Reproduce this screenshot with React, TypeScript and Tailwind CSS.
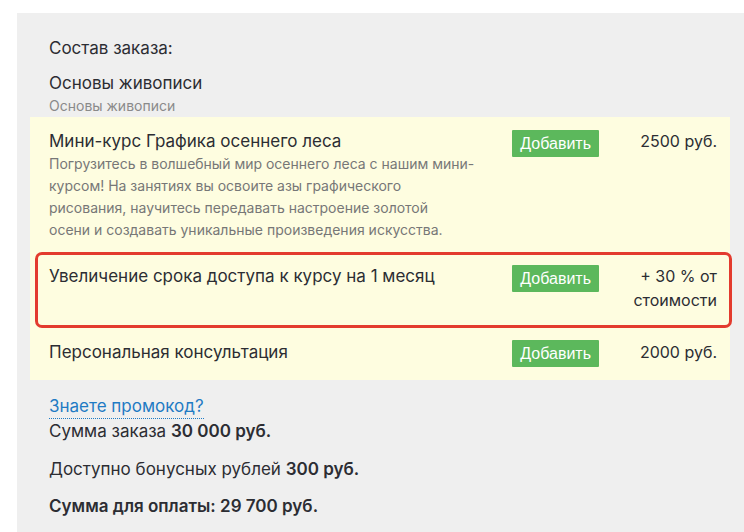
import React from "react";

const font = { fontFamily: "Inter, 'Noto Sans', sans-serif" };

function AddButton() {
  return (
    <button
      className="shrink-0 h-[27px] px-[8px] bg-[#5cb85c] text-white text-[16px] leading-[27px] rounded-[1px]"
      style={{ fontFamily: "'Liberation Sans', Arial, sans-serif" }}
    >
      Добавить
    </button>
  );
}

export default function App() {
  return (
    <div className="min-h-[532px] bg-white pt-[13px] pl-[17px]" style={font}>
      <div className="bg-[#efefef] min-h-[519px] pt-[23px] pl-[13px] pr-[14px] text-[#2c2d33]">
        <div className="pl-[19px] text-[17px] leading-[24px]">Состав заказа:</div>
        <div className="pl-[19px] mt-[11px] text-[17px] leading-[24px]">Основы живописи</div>
        <div className="pl-[19px] text-[14px] leading-[22px] text-[#8a8a8a]">Основы живописи</div>

        <div className="bg-[#fefde0] pl-[19px] pr-[13px]">
          <div className="flex items-start pt-[12px] pb-[11px]">
            <div className="flex-1">
              <div className="text-[17px] leading-[24px]">Мини-курс Графика осеннего леса</div>
              <div className="text-[14px] leading-[22px] text-[#777777]">
                Погрузитесь в волшебный мир осеннего леса с нашим мини-
                <br />
                курсом! На занятиях вы освоите азы графического
                <br />
                рисования, научитесь передавать настроение золотой
                <br />
                осени и создавать уникальные произведения искусства.
              </div>
            </div>
            <div className="mt-[1px]">
              <AddButton />
            </div>
            <div className="w-[118px] text-right text-[16px] leading-[24px]">2500 руб.</div>
          </div>

          <div className="relative flex items-start pt-[12px] pb-[16px]">
            <div className="absolute left-[-14px] right-[-15px] top-[0px] bottom-[0px] border-[3px] border-[#e33b2e] rounded-[7px] pointer-events-none" />
            <div className="flex-1 text-[17px] leading-[24px]">
              Увеличение срока доступа к курсу на 1 месяц
            </div>
            <div className="mt-[1px]">
              <AddButton />
            </div>
            <div className="w-[118px] text-right text-[16px] leading-[24px]">
              + 30 % от
              <br />
              стоимости
            </div>
          </div>

          <div className="flex items-start pt-[12px] pb-[13px]">
            <div className="flex-1 text-[17px] leading-[24px]">Персональная консультация</div>
            <div>
              <AddButton />
            </div>
            <div className="w-[118px] text-right text-[16px] leading-[24px]">2000 руб.</div>
          </div>
        </div>

        <div className="pl-[19px] pt-[14px] text-[17px] leading-[24px]">
          <div>
            <a className="inline-block text-[#1f7bc4] border-b border-dotted border-[#1f7bc4] leading-[23px] cursor-pointer">
              Знаете промокод?
            </a>
          </div>
          <div>
            Сумма заказа <b className="font-semibold">30 000 руб.</b>
          </div>
          <div className="mt-[14px]">
            Доступно бонусных рублей <b className="font-semibold">300 руб.</b>
          </div>
          <div className="mt-[13px] font-semibold">Сумма для оплаты: 29 700 руб.</div>
        </div>
      </div>
    </div>
  );
}
